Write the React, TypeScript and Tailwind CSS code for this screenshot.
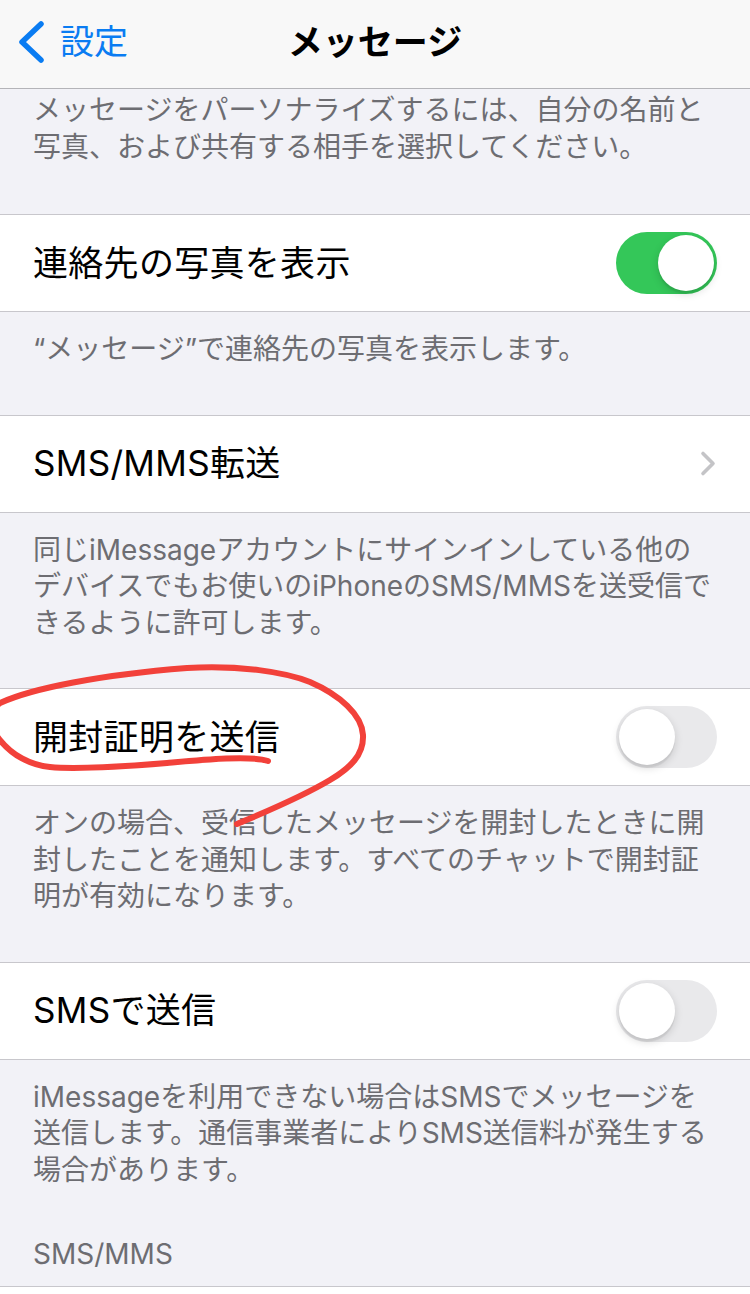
import React from 'react';

const font = { fontFamily: 'Inter, "Noto Sans CJK JP", sans-serif' };

const Toggle: React.FC<{ on: boolean }> = ({ on }) => (
  <div
    className={`w-[101px] h-[62px] rounded-full p-[3px] flex ${on ? 'bg-[#34c759] justify-end' : 'bg-[#e9e9eb] justify-start'}`}
  >
    <div className="w-[56px] h-[56px] rounded-full bg-white shadow-[0_3px_8px_rgba(0,0,0,0.15),0_3px_1px_rgba(0,0,0,0.06)]" />
  </div>
);

const Chevron = () => (
  <svg width="18" height="27" viewBox="0 0 18 27" fill="none">
    <path d="M4 3.5 L14 13.5 L4 23.5" stroke="#c4c4c7" strokeWidth="3.6" strokeLinecap="round" strokeLinejoin="round" />
  </svg>
);

const Row: React.FC<{ label: string; right: React.ReactNode }> = ({ label, right }) => (
  <div className="h-[98px] bg-white border-y border-[#c8c7cc] flex items-center justify-between pl-[33px] pr-[33px]">
    <span className="text-[35px] text-black leading-none tracking-[0.3px]">{label}</span>
    {right}
  </div>
);

const Footer: React.FC<{ lines: string[]; top?: string; bottom?: string }> = ({ lines, top = 'pt-[19px]', bottom = 'pb-[47px]' }) => (
  <div className={`px-[33px] ${top} ${bottom} text-[28px] leading-[36.5px] text-[#6d6d72]`}>
    {lines.map((l, i) => (
      <div key={i} className="whitespace-nowrap">{l}</div>
    ))}
  </div>
);

export default function App() {
  return (
    <div className="relative w-[750px] h-[1294px] overflow-hidden bg-[#f2f2f7]" style={font}>
      {/* nav bar */}
      <div className="h-[89px] bg-[#f8f8f8] border-b border-[#b4b4b8] grid grid-cols-[1fr_auto_1fr] items-center">
        <div className="flex items-center pl-[16px] gap-[14px] text-[#0a7cf2] pb-[4px]">
          <svg width="30" height="44" viewBox="0 0 30 44" fill="none">
            <path d="M25 4 L6 22 L25 40" stroke="#0a7cf2" strokeWidth="5.5" strokeLinecap="round" strokeLinejoin="round" />
          </svg>
          <span className="text-[34px] leading-none">設定</span>
        </div>
        <div className="text-[35px] font-bold text-black leading-none pb-[4px]">メッセージ</div>
        <div />
      </div>

      <Footer
        top="pt-[3px]"
        bottom="pb-[49px]"
        lines={['メッセージをパーソナライズするには、自分の名前と', '写真、および共有する相手を選択してください。']}
      />
      <Row label="連絡先の写真を表示" right={<Toggle on />} />
      <Footer lines={['“メッセージ”で連絡先の写真を表示します。']} />
      <Row label="SMS/MMS転送" right={<Chevron />} />
      <Footer
        lines={[
          '同じiMessageアカウントにサインインしている他の',
          'デバイスでもお使いのiPhoneのSMS/MMSを送受信で',
          'きるように許可します。',
        ]}
      />
      <Row label="開封証明を送信" right={<Toggle on={false} />} />
      <Footer
        lines={[
          'オンの場合、受信したメッセージを開封したときに開',
          '封したことを通知します。すべてのチャットで開封証',
          '明が有効になります。',
        ]}
      />
      <Row label="SMSで送信" right={<Toggle on={false} />} />
      <Footer
        bottom="pb-[48px]"
        lines={[
          'iMessageを利用できない場合はSMSでメッセージを',
          '送信します。通信事業者によりSMS送信料が発生する',
          '場合があります。',
        ]}
      />
      <div className="px-[33px] pb-[14px] text-[28px] leading-[36px] text-[#6d6d72]">SMS/MMS</div>
      <div className="h-[98px] bg-white border-t border-[#c8c7cc]" />

      {/* hand-drawn annotation */}
      <svg className="absolute left-0 top-0 pointer-events-none" width="750" height="1294" viewBox="0 0 750 1294" fill="none">
        <path
          d="M268 761 C250 755 200 760 167 763 C130 766 80 770 50 767 C30 765 12 755 0 740 C-15 722 -10 710 0 703 C33 688 100 675 187 668 C240 665 285 672 310 682 C340 695 362 715 363 735 C364 755 350 768 330 780 C300 798 265 812 237 824"
          stroke="#f2413a"
          strokeWidth="6"
          strokeLinecap="round"
          strokeLinejoin="round"
        />
      </svg>
    </div>
  );
}
